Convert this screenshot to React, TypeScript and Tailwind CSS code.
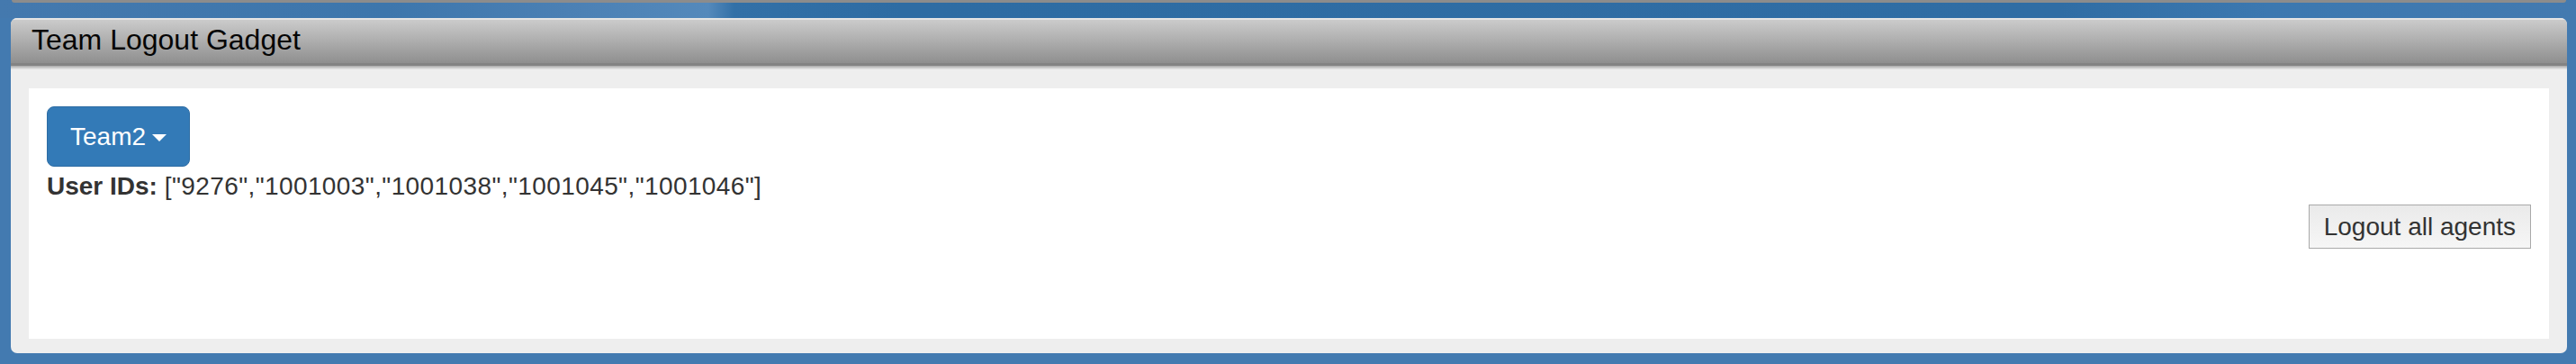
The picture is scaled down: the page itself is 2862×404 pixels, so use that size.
import React from "react";

export default function App() {
  const ids = ["9276", "1001003", "1001038", "1001045", "1001046"];
  return (
    <div
      className="w-[2862px] h-[404px] flex flex-col bg-[#437ab0] overflow-hidden"
      style={{ fontFamily: '"Liberation Sans", Arial, Helvetica, sans-serif' }}
    >
      {/* top strip with previous gadget's bottom edge */}
      <div className="h-[20px] shrink-0 bg-[linear-gradient(to_right,#4479ae_0%,#3d76ac_15%,#4b80b4_22%,#5489bb_27.5%,#3270a7_28.5%,#2e6ca3_35%,#306da4_80%,#3c78b0_88%,#437ab0_100%)]">
        <div className="ml-[13px] mr-[11px] h-[3px] rounded-b-[6px] bg-[#8c8c8c]" />
      </div>

      {/* panel */}
      <div className="ml-[12px] mr-[10px] mb-[12px] flex-1 flex flex-col rounded-[7px] overflow-hidden bg-[#eeeeee]">
        <div className="h-[53px] shrink-0 border-t-2 border-t-[#e4e4e4] border-b-[3px] border-b-[#838383] bg-[linear-gradient(to_bottom,#cbcbcb,#8f8f8f)] pl-[23px] pt-[4px]">
          <div className="text-[32px] leading-[36px] text-[#050505]">Team Logout Gadget</div>
        </div>
        <div className="h-[4px] shrink-0 bg-[linear-gradient(to_bottom,#a9a9a9,#e9e9e9)]" />
        <div className="flex-1 flex flex-col px-[20px] pt-[21px] pb-[16px]">
          <div className="flex-1 bg-white p-[20px] flex flex-col items-start">
            <button className="h-[67px] flex items-center px-[25px] rounded-[8px] border border-[#2e6da4] bg-[#337ab7] text-white text-[28px] leading-[40px]">
              <span>Team2</span>
              <span className="ml-[7px] mt-[2px] w-0 h-0 border-x-[8px] border-x-transparent border-t-[8px] border-t-white" />
            </button>
            <div className="mt-[2px] text-[28px] leading-[40px] text-[#333333]">
              <b>User IDs:</b>{" "}
              <span className="tracking-[0.4px]">{JSON.stringify(ids)}</span>
            </div>
            <div className="self-stretch flex justify-end">
              <button className="h-[49px] flex items-center px-[16px] border border-[#a9a9a9] bg-[linear-gradient(to_bottom,#eaeaea,#f6f6f6)] text-[28px] leading-[32px] text-[#333333]">
                Logout all agents
              </button>
            </div>
          </div>
        </div>
      </div>
    </div>
  );
}
